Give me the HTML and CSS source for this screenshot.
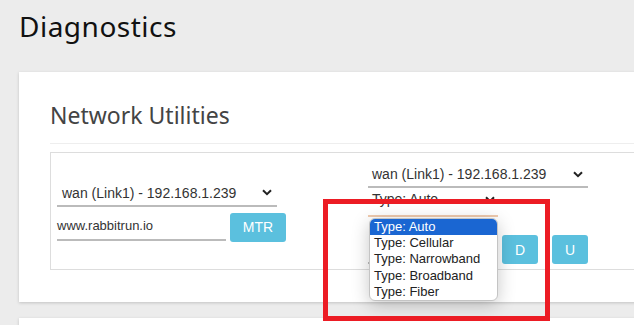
FILE: index.html
```html
<!DOCTYPE html>
<html>
<head>
<meta charset="utf-8">
<link rel="stylesheet" href="styles.css">
</head>
<body>
<h1 class="page-title">Diagnostics</h1>
<section class="card">
  <h2 class="card-title">Network Utilities</h2>
  <hr class="sep">
  <div class="tool-box">
    <div class="col col-left">
      <div class="select w220"><span>wan (Link1) - 192.168.1.239</span><svg class="chev" width="10" height="7" viewBox="0 0 10 7"><polyline points="1,1.2 5,5.2 9,1.2" fill="none" stroke="#222" stroke-width="2"/></svg></div>
      <div class="row">
        <div class="input w169">www.rabbitrun.io</div>
        <button class="btn btn-mtr">MTR</button>
      </div>
    </div>
    <div class="col col-right">
      <div class="select w220"><span>wan (Link1) - 192.168.1.239</span><svg class="chev" width="10" height="7" viewBox="0 0 10 7"><polyline points="1,1.2 5,5.2 9,1.2" fill="none" stroke="#222" stroke-width="2"/></svg></div>
      <div class="select w130 focused type-select"><span>Type: Auto</span><svg class="chev" width="10" height="7" viewBox="0 0 10 7"><polyline points="1,1.2 5,5.2 9,1.2" fill="none" stroke="#222" stroke-width="2"/></svg>
        <ul class="popup">
          <li class="active">Type: Auto</li>
          <li>Type: Cellular</li>
          <li>Type: Narrowband</li>
          <li>Type: Broadband</li>
          <li>Type: Fiber</li>
        </ul>
      </div>
      <div class="row row-bottom">
        <div class="input w130"></div>
        <button class="btn btn-sq btn-d">D</button>
        <button class="btn btn-sq btn-u">U</button>
      </div>
    </div>
  </div>
</section>
<section class="card card-next"></section>
<div class="highlight"></div>
</body>
</html>
```
FILE: styles.css
```css
html, body {
  margin: 0;
  padding: 0;
}
body {
  background: #ececec;
  overflow: hidden;
  width: 634px;
  height: 325px;
  position: relative;
  font-family: "Liberation Sans", Arial, sans-serif;
}
.page-title {
  margin: 9px 0 29px 19px;
  font-family: "Noto Sans", sans-serif;
  font-weight: 400;
  font-size: 28px;
  letter-spacing: 0.5px;
  line-height: 34px;
  color: #111;
}
.card {
  margin-left: 19px;
  width: 700px;
  background: #fff;
  box-sizing: border-box;
  padding: 30px 0 32px 31px;
  box-shadow: 0 1px 3px rgba(0,0,0,0.18);
}
.card-next {
  margin-top: 16px;
  height: 60px;
}
.card-title {
  margin: 0;
  font-family: "Noto Sans", sans-serif;
  font-weight: 400;
  font-size: 23px;
  line-height: 26px;
  color: #444;
}
.sep {
  margin: 15px 0 0 0;
  border: 0;
  border-top: 1px solid #eee;
  height: 0;
}
.tool-box {
  margin-top: 8px;
  height: 118px;
  box-sizing: border-box;
  border: 1px solid #ddd;
  padding-left: 6px;
  display: grid;
  grid-template-columns: 311px auto;
  align-items: center;
}
.col {
  display: flex;
  flex-direction: column;
}
.col-left .row {
  margin-top: 6px;
}
.col-right {
  padding-top: 4px;
}
.row {
  display: flex;
  align-items: flex-start;
  gap: 4px;
}
.select {
  height: 26px;
  box-sizing: border-box;
  border-bottom: 2px solid #bbb;
  padding: 0 5px 0 5px;
  display: flex;
  align-items: center;
  justify-content: space-between;
  font-size: 14px;
  color: #333;
  position: relative;
}
.col-right .select {
  padding-left: 4px;
}
.w220 { width: 220px; }
.w130 { width: 130px; }
.w169 { width: 169px; }
.type-select {
  margin-top: 1px;
  height: 28px;
  align-items: flex-start;
  padding-top: 2px;
  border-bottom-color: #efcaae;
  padding-right: 3px;
}
.type-select .chev {
  margin-top: 5px;
}
.input {
  height: 28px;
  box-sizing: border-box;
  border-bottom: 2px solid #bbb;
  font-size: 13px;
  color: #333;
  display: flex;
  align-items: center;
  padding-left: 0;
}
.btn {
  border: none;
  border-radius: 3px;
  background: #5bc0de;
  color: #fff;
  font-family: "Liberation Sans", Arial, sans-serif;
  font-size: 14px;
  height: 29px;
  padding: 0;
}
.btn-mtr {
  width: 56px;
}
.row-bottom {
  margin-top: 18px;
  align-items: flex-end;
  gap: 0;
}
.btn-sq {
  width: 36px;
}
.btn-d { margin-left: 4px; }
.btn-u { margin-left: 14px; }
.popup {
  position: absolute;
  top: 29px;
  left: 1px;
  width: 129px;
  height: 83px;
  box-sizing: border-box;
  margin: 0;
  padding: 0;
  list-style: none;
  background: #fff;
  border: 1px solid #c4c4c4;
  border-radius: 6px;
  overflow: hidden;
  box-shadow: 0 4px 18px rgba(0,0,0,0.22);
  font-size: 13px;
  color: #222;
  z-index: 2;
}
.popup li {
  height: 16.2px;
  line-height: 16px;
  padding-left: 4px;
  white-space: nowrap;
}
.popup li.active {
  background: #1a66d2;
  color: #fff;
}
.highlight {
  position: absolute;
  left: 323px;
  top: 199px;
  width: 227px;
  height: 122px;
  box-sizing: border-box;
  border: 5px solid #ec1c24;
  z-index: 5;
}
```
